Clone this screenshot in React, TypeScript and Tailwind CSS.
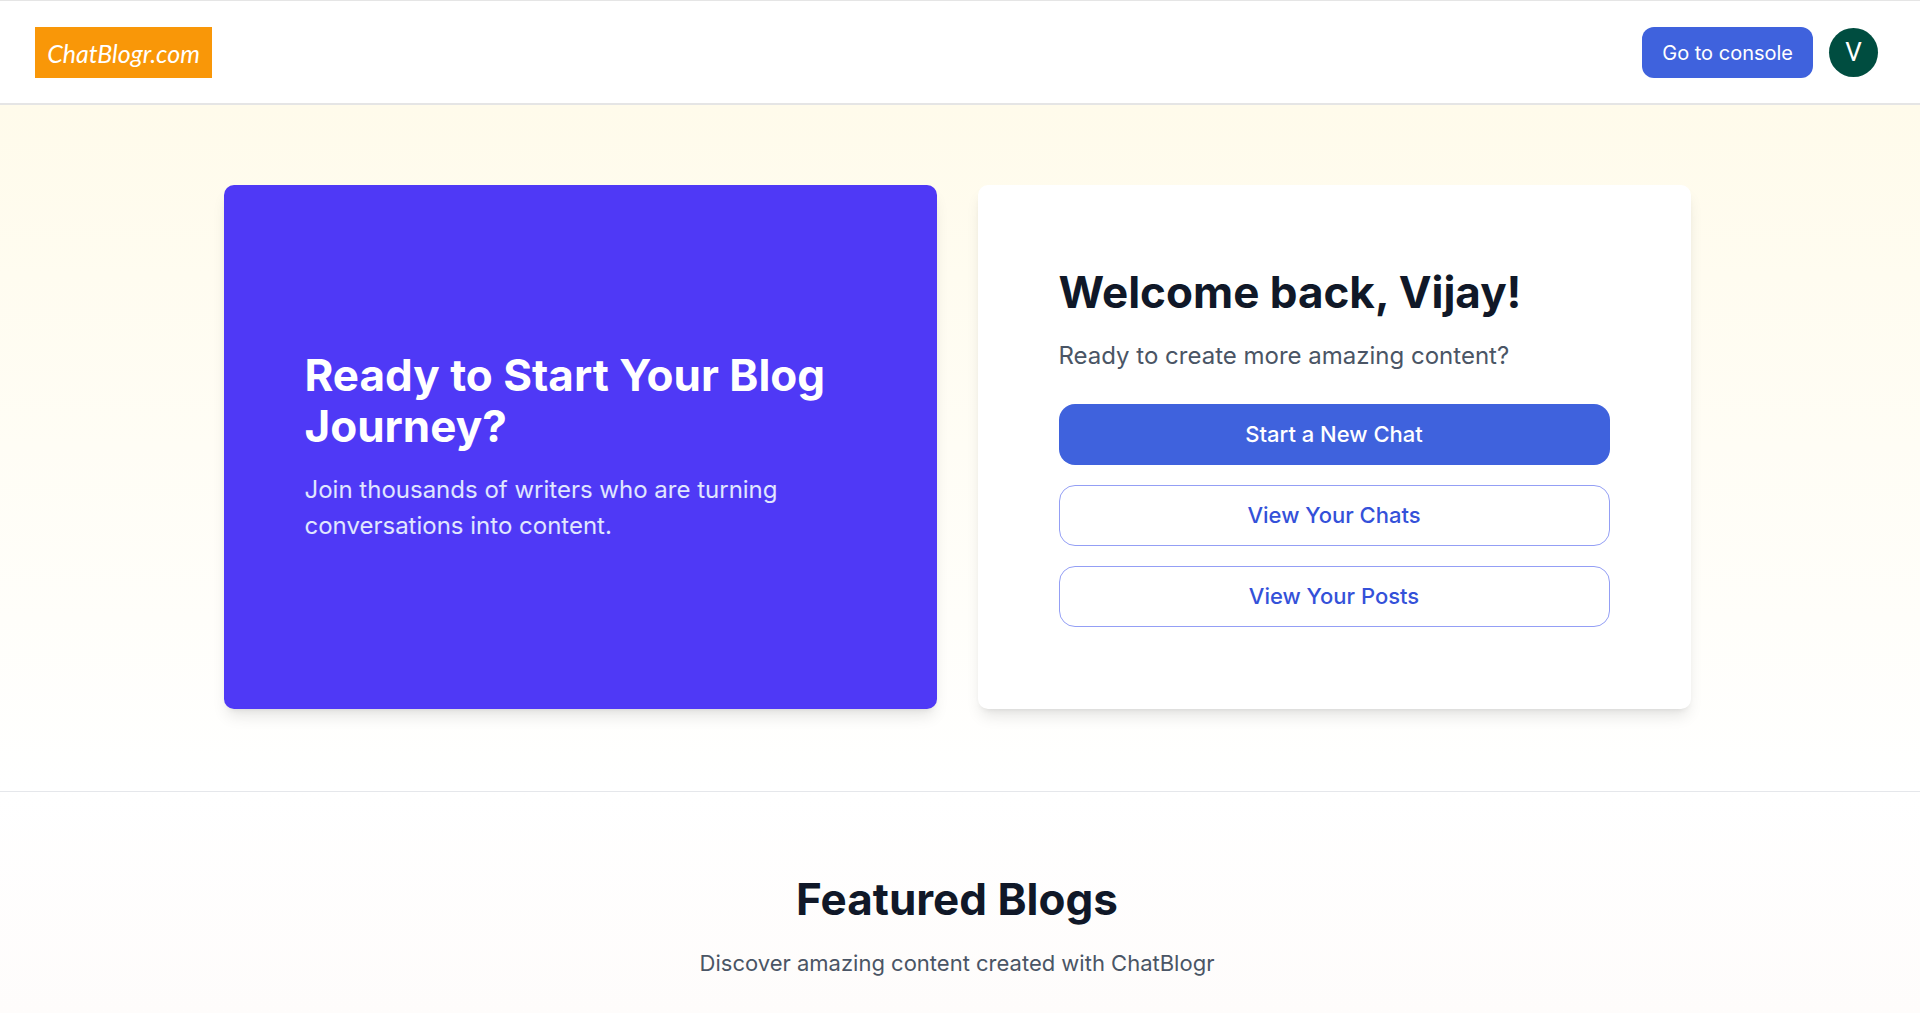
import React from "react";

const outlineButton =
  "h-[61px] w-full rounded-[16px] border border-[#949ff5] bg-white text-[22px] font-medium text-[#3451d9] hover:bg-indigo-50";

function Logo() {
  return (
    <a href="#" className="flex h-[51px] w-[177px] items-center justify-center bg-[#f99708]">
      <span className="font-[Lato] text-[25px] leading-8 italic text-white">ChatBlogr.com</span>
    </a>
  );
}

function Header() {
  return (
    <header className="flex items-center justify-between border-t border-b-2 border-t-[#e5e5e5] border-b-[#e5e5e5] bg-white pt-[26px] pr-[42px] pb-[25px] pl-[35px]">
      <Logo />
      <div className="flex items-center gap-4">
        <button className="h-[51px] rounded-[12px] bg-[#3f62dd] px-5 text-[20px] text-white hover:bg-blue-700">
          Go to console
        </button>
        <button
          aria-label="Account"
          className="flex size-[49px] items-center justify-center rounded-full bg-[#004d40] font-[Roboto] text-[26px] text-white"
        >
          V
        </button>
      </div>
    </header>
  );
}

export default function App() {
  return (
    <div className="min-h-screen bg-white font-[Inter,sans-serif] text-gray-900">
      <Header />
      <main>
        <section className="border-b border-gray-200 bg-linear-to-b from-[#fffbeb] to-white pt-20 pr-1.5 pb-[82px]">
          <div className="mx-auto grid max-w-[1467px] grid-cols-2 gap-[41px]">
            <div className="flex flex-col justify-center rounded-[10px] bg-[#4f39f6] px-[81px] py-[82px] shadow-lg">
              <h2 className="text-[44px] leading-[51px] font-bold text-white">
                Ready to Start Your Blog Journey?
              </h2>
              <p className="mt-5 text-[24px] leading-9 text-indigo-100">
                Join thousands of writers who are turning conversations into content.
              </p>
            </div>
            <div className="rounded-[10px] bg-white px-[81px] py-[82px] shadow-lg">
              <h2 className="text-[44px] leading-[51px] font-bold text-[#101828]">Welcome back, Vijay!</h2>
              <p className="mt-5 text-[24px] leading-9 text-[#4a5565]">Ready to create more amazing content?</p>
              <div className="mt-[30px] flex flex-col gap-5">
                <button className="h-[61px] w-full rounded-[16px] bg-[#3f62dd] text-[22px] font-medium text-white hover:bg-blue-700">
                  Start a New Chat
                </button>
                <button className={outlineButton}>View Your Chats</button>
                <button className={outlineButton}>View Your Posts</button>
              </div>
            </div>
          </div>
        </section>

        <section className="bg-linear-to-b from-white to-[#fefcfb] pt-[82px] pr-1.5 pb-8 text-center">
          <h2 className="text-[44px] leading-[51px] font-bold text-[#101828]">Featured Blogs</h2>
          <p className="mt-5 text-[22px] leading-9 text-[#4a5565]">Discover amazing content created with ChatBlogr</p>
        </section>
      </main>
    </div>
  );
}
